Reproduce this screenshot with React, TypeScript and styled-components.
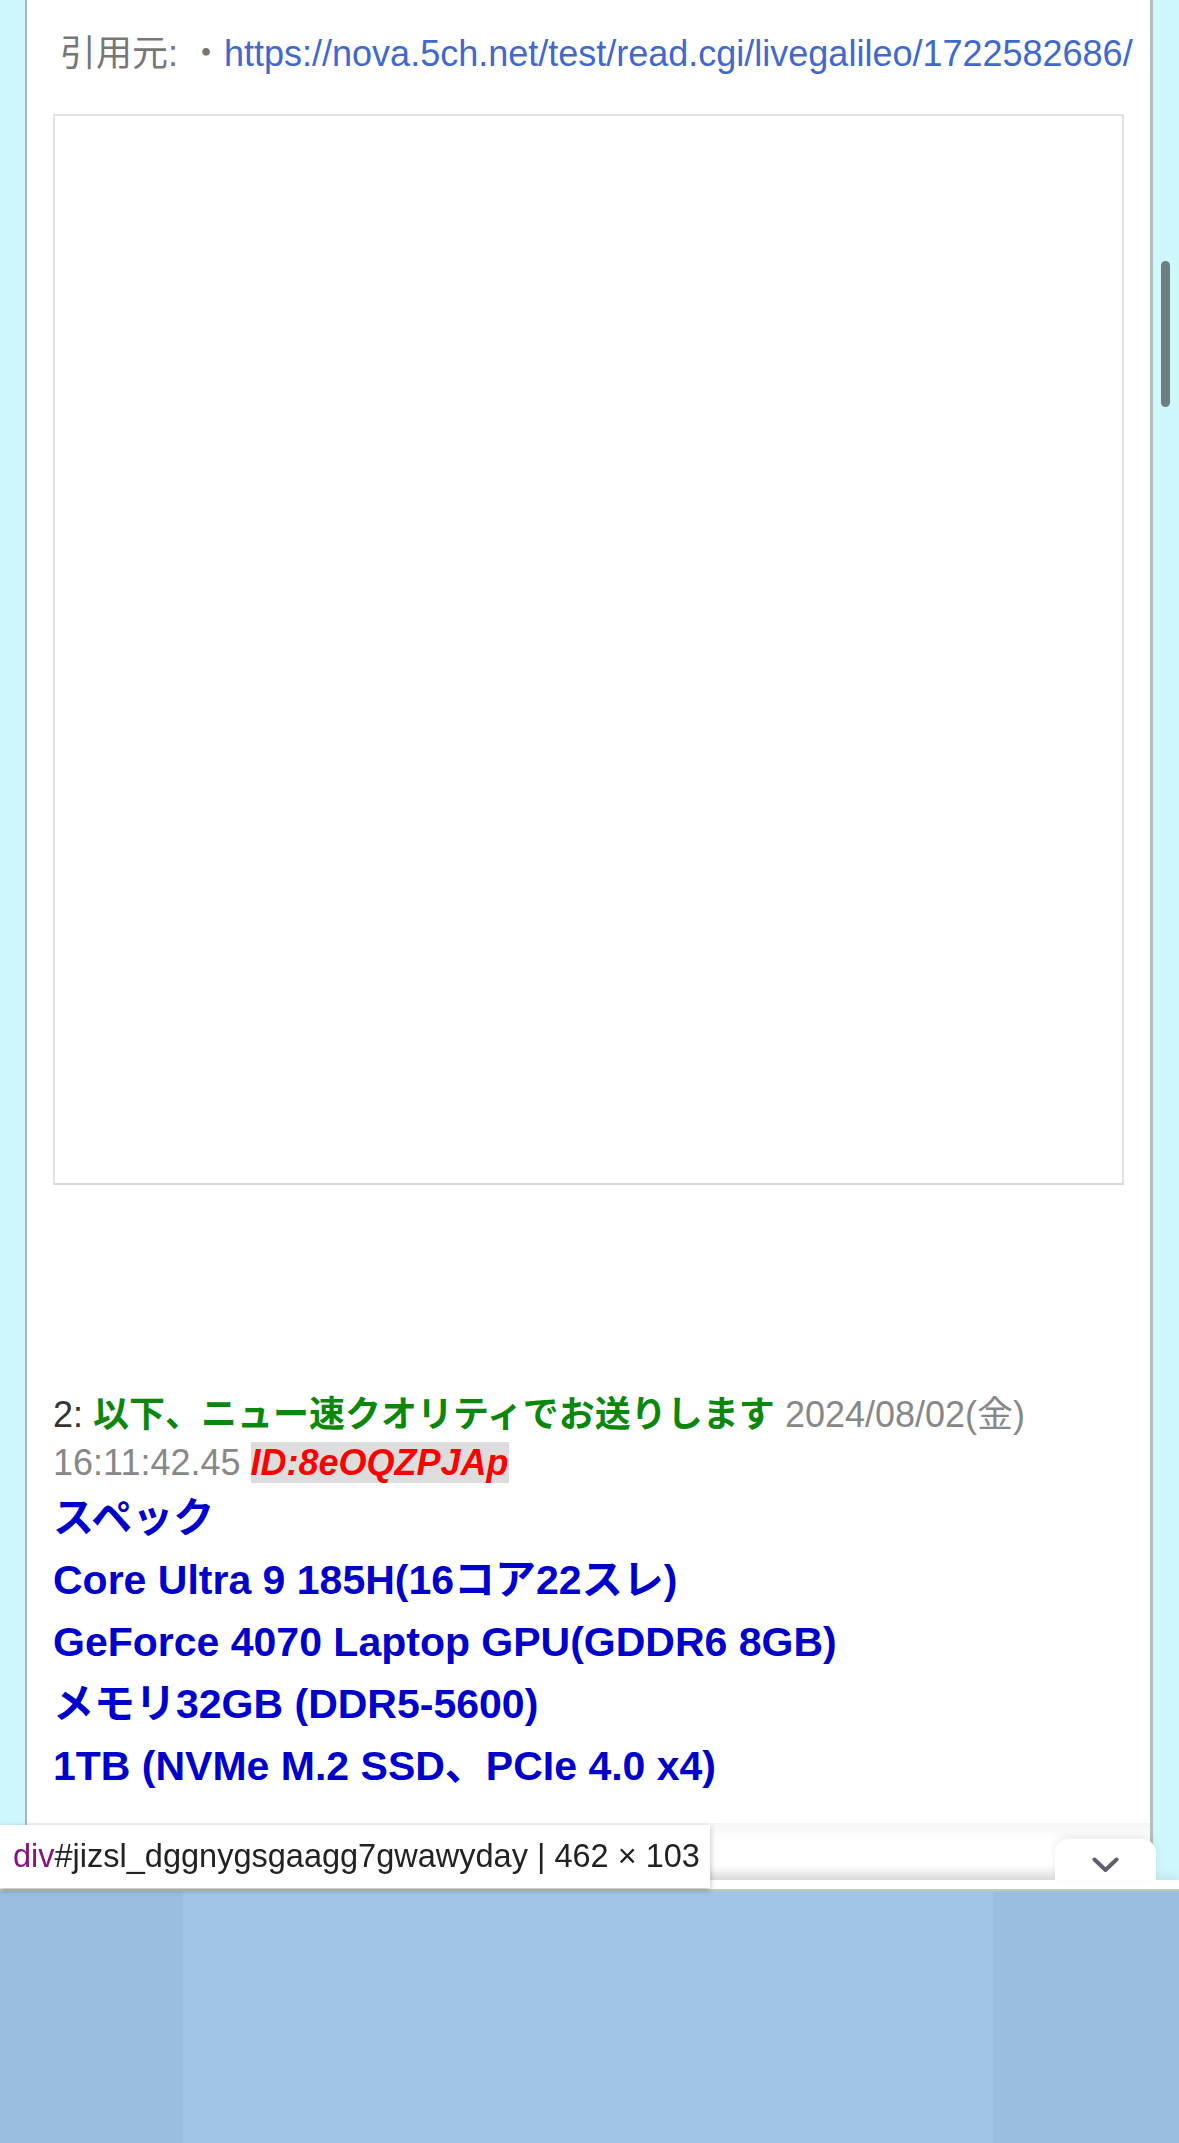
import React from "react";
import styled, { createGlobalStyle } from "styled-components";

const GlobalStyle = createGlobalStyle`
    html,
    body {
        margin: 0;
        padding: 0;
        background-color: #cff8fd;
        overflow: hidden;
    }

    body {
        font-family: "Liberation Sans", "Noto Sans CJK JP", sans-serif;
    }
`;

const Panel = styled.div`
    box-sizing: border-box;
    width: 1128px;
    min-height: 2143px;
    margin-left: 25px;
    padding: 29px 26px 0 26px;
    background-color: #ffffff;
    border-left: 2px solid #a9b7bc;
    border-right: 3px solid #b3bec2;
`;

const SourceLine = styled.div`
    padding-left: 7px;
    font-size: 36px;
    line-height: 50px;
    color: #777777;
    white-space: nowrap;

    & a {
        color: #4168cf;
        text-decoration: none;
    }
`;

const EmbedBox = styled.div`
    box-sizing: border-box;
    height: 1071px;
    margin-top: 35px;
    border: 2px solid #e3e3e3;
    border-bottom-color: #d8d8d8;
    background-color: #ffffff;
`;

const Post = styled.div`
    margin-top: 206px;
`;

const PostHeader = styled.div`
    font-size: 36px;
    line-height: 48px;
    color: #333333;
`;

const Name = styled.b`
    color: #0b870b;
`;

const Date = styled.span`
    color: #888888;
`;

const PostId = styled.span`
    background-color: #dddddd;
    color: #ff0000;
    font-weight: bold;
    font-style: italic;
`;

const PostBody = styled.div`
    font-size: 41px;
    line-height: 62px;
    font-weight: bold;
    color: #0000cc;
`;

const Scrollbar = styled.div`
    position: fixed;
    left: 1161px;
    top: 261px;
    width: 9px;
    height: 146px;
    border-radius: 5px;
    background-color: #6e7f80;
`;

const Shade = styled.div`
    position: fixed;
    left: 27px;
    width: 1123px;
    top: 1823px;
    height: 57px;
    background: linear-gradient(
        to bottom,
        rgba(0, 0, 0, 0.04) 0,
        rgba(0, 0, 0, 0) 16px,
        rgba(0, 0, 0, 0) 42px,
        rgba(0, 0, 0, 0.09) 57px
    );
`;

const BottomBar = styled.div`
    position: fixed;
    left: 0;
    right: 0;
    bottom: 0;
    height: 263px;
    display: flex;
    flex-direction: column;
    box-shadow: 0 -4px 10px rgba(0, 0, 0, 0.08);
`;

const BarStrip = styled.div`
    height: 9px;
    background-color: #ffffff;
    border-bottom: 2px solid #bccfb6;
`;

const AdArea = styled.div`
    flex: 1;
    display: flex;
`;

const AdBand = styled.div<{ $width?: number; $light?: boolean }>`
    flex: ${(p) => (p.$width ? `0 0 ${p.$width}px` : "1")};
    background-color: ${(p) => (p.$light ? "#a2c4e8" : "#9bbde2")};
`;

const CollapseTab = styled.div`
    position: absolute;
    right: 23px;
    bottom: 100%;
    width: 101px;
    height: 41px;
    display: flex;
    justify-content: center;
    padding-top: 18px;
    box-sizing: border-box;
    border-radius: 14px 14px 0 0;
    background-color: #ffffff;
    box-shadow: 0 -3px 8px rgba(0, 0, 0, 0.08);
`;

const Tooltip = styled.div`
    position: fixed;
    left: 0;
    top: 1825px;
    width: 710px;
    height: 63px;
    box-sizing: border-box;
    padding-left: 13px;
    display: flex;
    align-items: center;
    background-color: #ffffff;
    box-shadow: 0 2px 6px rgba(0, 0, 0, 0.28);
    font-family: "Liberation Sans", sans-serif;
    font-size: 32.5px;
    color: #222222;
    white-space: nowrap;
    z-index: 2;
`;

const Tag = styled.span`
    color: #881280;
`;

const specs = [
    "スペック",
    "Core Ultra 9 185H(16コア22スレ)",
    "GeForce 4070 Laptop GPU(GDDR6 8GB)",
    "メモリ32GB (DDR5-5600)",
    "1TB (NVMe M.2 SSD、PCIe 4.0 x4)",
];

const App = () => {
    return (
        <>
            <GlobalStyle />
            <Panel>
                <SourceLine>
                    引用元: ・
                    <a href="#">
                        https://nova.5ch.net/test/read.cgi/livegalileo/1722582686/
                    </a>
                </SourceLine>
                <EmbedBox />
                <Post>
                    <PostHeader>
                        2: <Name>以下、ニュー速クオリティでお送りします</Name>{" "}
                        <Date>2024/08/02(金) 16:11:42.45</Date>{" "}
                        <PostId>ID:8eOQZPJAp</PostId>
                    </PostHeader>
                    <PostBody>
                        {specs.map((line) => (
                            <div key={line}>{line}</div>
                        ))}
                    </PostBody>
                </Post>
            </Panel>
            <Scrollbar />
            <Shade />
            <BottomBar>
                <CollapseTab>
                    <svg width="27" height="16" viewBox="0 0 27 16">
                        <polyline
                            points="2.5,2.5 13.5,13 24.5,2.5"
                            fill="none"
                            stroke="#60606c"
                            strokeWidth="4"
                            strokeLinecap="round"
                            strokeLinejoin="round"
                        />
                    </svg>
                </CollapseTab>
                <BarStrip />
                <AdArea>
                    <AdBand $width={183} />
                    <AdBand $light />
                    <AdBand $width={186} />
                </AdArea>
            </BottomBar>
            <Tooltip>
                <Tag>div</Tag>#jizsl_dggnygsgaagg7gwawyday | 462 × 103
            </Tooltip>
        </>
    );
};

export default App;
